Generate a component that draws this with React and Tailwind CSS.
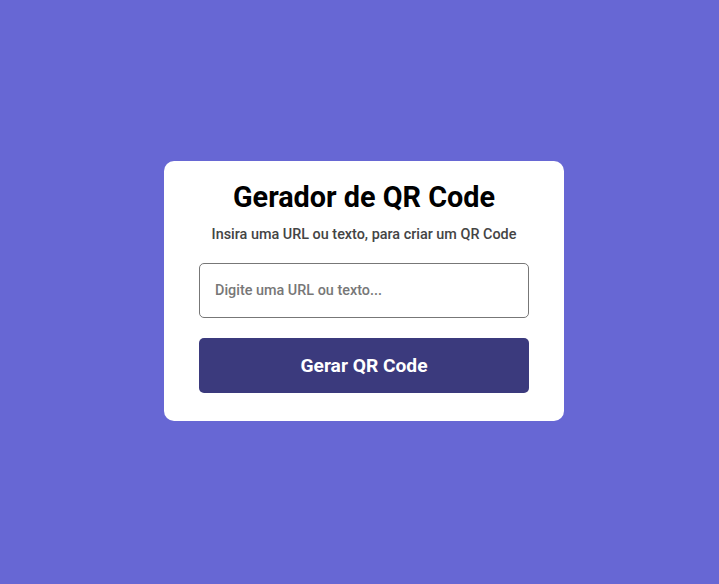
import React, { useState } from 'react';

const App = () => {
  const [text, setText] = useState('');

  return (
    <div
      className="flex min-h-[584px] w-full items-center justify-center bg-[#6767d4] pb-[2px] pl-[9px]"
      style={{ fontFamily: 'Roboto, "Liberation Sans", sans-serif' }}
    >
      <div className="flex w-[400px] flex-col items-center rounded-[10px] bg-white px-[35px] pb-[28px] pt-[20px]">
        <h1 className="text-[28.8px] font-bold leading-[33px] text-black">Gerador de QR Code</h1>
        <p className="mt-[13px] text-[14.4px] font-medium leading-[16px] text-[#444]">
          Insira uma URL ou texto, para criar um QR Code
        </p>
        <input
          type="text"
          value={text}
          onChange={(e) => setText(e.target.value)}
          placeholder="Digite uma URL ou texto..."
          className="mt-[20px] h-[55px] w-full rounded-[5px] border border-[#777] px-[15px] text-[14.4px] font-medium outline-none placeholder:text-[#777]"
        />
        <button className="mt-[20px] h-[55px] w-full rounded-[5px] bg-[#3b3a7d] pt-[2px] text-[19.2px] font-bold text-white">
          Gerar QR Code
        </button>
      </div>
    </div>
  );
};

export default App;
